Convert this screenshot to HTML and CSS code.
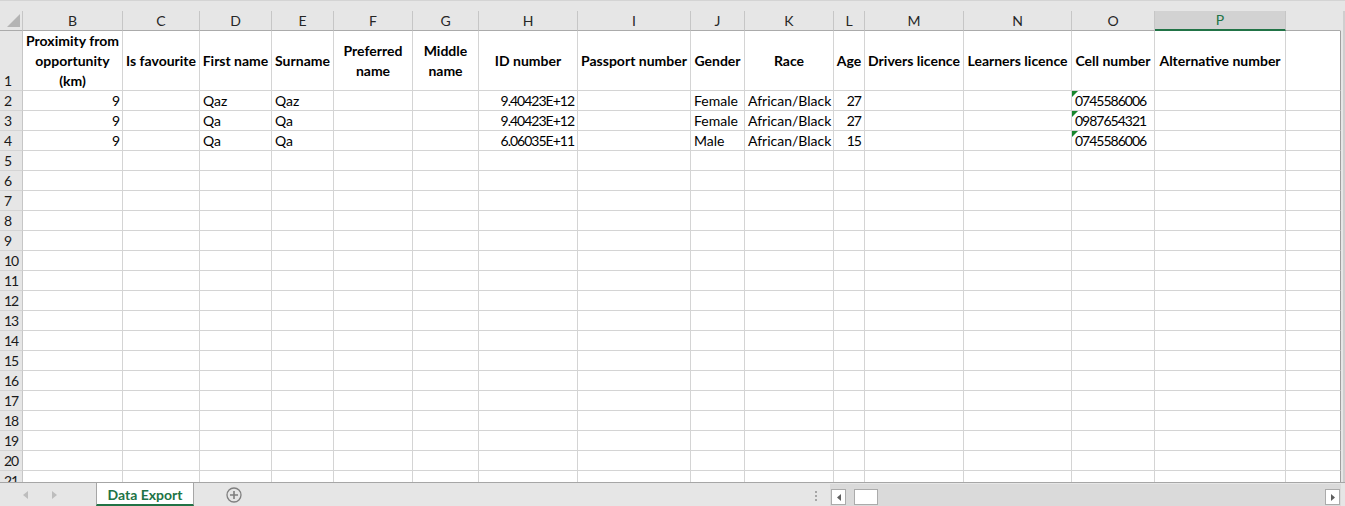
FILE: index.html
```html
<!DOCTYPE html>
<html lang="en">
<head>
<meta charset="utf-8">
<title>Data Export</title>
<link rel="stylesheet" href="styles.css">
</head>
<body>
<div class="app">
  <div class="topstrip"></div>
  <div class="main">
    <div class="sheet">
      <div class="row hdr">
        <div class="corner"><svg width="13" height="13" viewBox="0 0 13 13"><polygon points="13,0 13,13 0,13" fill="#b4b4b4"/></svg></div>
        <div>B</div><div>C</div><div>D</div><div>E</div><div>F</div><div>G</div><div>H</div><div>I</div><div>J</div><div>K</div><div>L</div><div>M</div><div>N</div><div>O</div><div class="sel">P</div><div class="blank"></div>
      </div>
      <div class="row r1">
        <div class="rh">1</div>
        <div>Proximity from<br>opportunity<br>(km)</div>
        <div>Is favourite</div>
        <div>First name</div>
        <div>Surname</div>
        <div>Preferred<br>name</div>
        <div>Middle<br>name</div>
        <div>ID number</div>
        <div>Passport number</div>
        <div>Gender</div>
        <div>Race</div>
        <div>Age</div>
        <div>Drivers licence</div>
        <div>Learners licence</div>
        <div>Cell number</div>
        <div>Alternative number</div>
        <div></div>
      </div>
      <div class="row">
        <div class="rh">2</div><div class="num">9</div><div></div><div>Qaz</div><div>Qaz</div><div></div><div></div><div class="num">9.40423E+12</div><div></div><div>Female</div><div>African/Black</div><div class="num">27</div><div></div><div></div><div class="tri digits">0745586006</div><div></div><div></div>
      </div>
      <div class="row">
        <div class="rh">3</div><div class="num">9</div><div></div><div>Qa</div><div>Qa</div><div></div><div></div><div class="num">9.40423E+12</div><div></div><div>Female</div><div>African/Black</div><div class="num">27</div><div></div><div></div><div class="tri digits">0987654321</div><div></div><div></div>
      </div>
      <div class="row">
        <div class="rh">4</div><div class="num">9</div><div></div><div>Qa</div><div>Qa</div><div></div><div></div><div class="num">6.06035E+11</div><div></div><div>Male</div><div>African/Black</div><div class="num">15</div><div></div><div></div><div class="tri digits">0745586006</div><div></div><div></div>
      </div>
      <div class="row"><div class="rh">5</div><div></div><div></div><div></div><div></div><div></div><div></div><div></div><div></div><div></div><div></div><div></div><div></div><div></div><div></div><div></div><div></div></div>
      <div class="row"><div class="rh">6</div><div></div><div></div><div></div><div></div><div></div><div></div><div></div><div></div><div></div><div></div><div></div><div></div><div></div><div></div><div></div><div></div></div>
      <div class="row"><div class="rh">7</div><div></div><div></div><div></div><div></div><div></div><div></div><div></div><div></div><div></div><div></div><div></div><div></div><div></div><div></div><div></div><div></div></div>
      <div class="row"><div class="rh">8</div><div></div><div></div><div></div><div></div><div></div><div></div><div></div><div></div><div></div><div></div><div></div><div></div><div></div><div></div><div></div><div></div></div>
      <div class="row"><div class="rh">9</div><div></div><div></div><div></div><div></div><div></div><div></div><div></div><div></div><div></div><div></div><div></div><div></div><div></div><div></div><div></div><div></div></div>
      <div class="row"><div class="rh">10</div><div></div><div></div><div></div><div></div><div></div><div></div><div></div><div></div><div></div><div></div><div></div><div></div><div></div><div></div><div></div><div></div></div>
      <div class="row"><div class="rh">11</div><div></div><div></div><div></div><div></div><div></div><div></div><div></div><div></div><div></div><div></div><div></div><div></div><div></div><div></div><div></div><div></div></div>
      <div class="row"><div class="rh">12</div><div></div><div></div><div></div><div></div><div></div><div></div><div></div><div></div><div></div><div></div><div></div><div></div><div></div><div></div><div></div><div></div></div>
      <div class="row"><div class="rh">13</div><div></div><div></div><div></div><div></div><div></div><div></div><div></div><div></div><div></div><div></div><div></div><div></div><div></div><div></div><div></div><div></div></div>
      <div class="row"><div class="rh">14</div><div></div><div></div><div></div><div></div><div></div><div></div><div></div><div></div><div></div><div></div><div></div><div></div><div></div><div></div><div></div><div></div></div>
      <div class="row"><div class="rh">15</div><div></div><div></div><div></div><div></div><div></div><div></div><div></div><div></div><div></div><div></div><div></div><div></div><div></div><div></div><div></div><div></div></div>
      <div class="row"><div class="rh">16</div><div></div><div></div><div></div><div></div><div></div><div></div><div></div><div></div><div></div><div></div><div></div><div></div><div></div><div></div><div></div><div></div></div>
      <div class="row"><div class="rh">17</div><div></div><div></div><div></div><div></div><div></div><div></div><div></div><div></div><div></div><div></div><div></div><div></div><div></div><div></div><div></div><div></div></div>
      <div class="row"><div class="rh">18</div><div></div><div></div><div></div><div></div><div></div><div></div><div></div><div></div><div></div><div></div><div></div><div></div><div></div><div></div><div></div><div></div></div>
      <div class="row"><div class="rh">19</div><div></div><div></div><div></div><div></div><div></div><div></div><div></div><div></div><div></div><div></div><div></div><div></div><div></div><div></div><div></div><div></div></div>
      <div class="row"><div class="rh">20</div><div></div><div></div><div></div><div></div><div></div><div></div><div></div><div></div><div></div><div></div><div></div><div></div><div></div><div></div><div></div><div></div></div>
      <div class="row"><div class="rh">21</div><div></div><div></div><div></div><div></div><div></div><div></div><div></div><div></div><div></div><div></div><div></div><div></div><div></div><div></div><div></div><div></div></div>
    </div>
    <div class="vstrip"></div>
  </div>
  <div class="tabbar">
    <div class="nav">
      <svg class="arrow" width="5" height="8" viewBox="0 0 5 8"><polygon points="5,0 5,8 0,4" fill="#bdbdbd"/></svg>
      <svg class="arrow" width="5" height="8" viewBox="0 0 5 8"><polygon points="0,0 0,8 5,4" fill="#bdbdbd"/></svg>
    </div>
    <div class="tab">Data Export</div>
    <div class="add">
      <svg width="16" height="16" viewBox="0 0 16 16"><circle cx="8" cy="8" r="7" fill="none" stroke="#7f7f7f" stroke-width="1.3"/><path d="M8 4v8M4 8h8" stroke="#7f7f7f" stroke-width="1.6"/></svg>
    </div>
    <div class="spacer"></div>
    <div class="dots">
      <svg width="2" height="10" viewBox="0 0 2 10"><rect x="0" y="0" width="2" height="2" fill="#a6a6a6"/><rect x="0" y="4" width="2" height="2" fill="#a6a6a6"/><rect x="0" y="8" width="2" height="2" fill="#a6a6a6"/></svg>
    </div>
    <div class="hscroll">
      <div class="sbtn"><svg width="4" height="7" viewBox="0 0 4 7"><polygon points="4,0 4,7 0,3.5" fill="#5f5f5f"/></svg></div>
      <div class="thumb"></div>
      <div class="track"></div>
      <div class="sbtn"><svg width="4" height="7" viewBox="0 0 4 7"><polygon points="0,0 0,7 4,3.5" fill="#5f5f5f"/></svg></div>
    </div>
    <div class="endgap"></div>
  </div>
</div>
</body>
</html>
```

FILE: styles.css
```css
body {
  margin: 0;
  background: #e6e6e6;
  font-family: Lato, "Liberation Sans", sans-serif;
  font-size: 14px;
  color: #000;
}

.app {
  width: 1345px;
  height: 506px;
  display: flex;
  flex-direction: column;
  overflow: hidden;
}

.topstrip {
  height: 11px;
  flex: none;
  box-sizing: border-box;
  border-top: 1px solid #d4d4d4;
  background: #e6e6e6;
}

.main {
  height: 471px;
  flex: none;
  display: flex;
  overflow: hidden;
}

.sheet {
  width: 1341px;
  flex: none;
  background: #fff;
  overflow: hidden;
}

.row {
  display: grid;
  grid-template-columns: 23px 100px 77px 72px 62px 79px 66px 99px 113px 54px 89px 31px 99px 108px 83px 131px 55px;
  height: 20px;
}

.row > div {
  box-sizing: border-box;
  border-right: 1px solid #d4d4d4;
  border-bottom: 1px solid #d4d4d4;
  padding: 0 3px;
  line-height: 19px;
  white-space: nowrap;
  overflow: hidden;
}

.row > div:last-child {
  border-right-color: #9e9e9e;
}

.hdr {
  background: #e6e6e6;
}

.hdr > div {
  text-align: center;
  color: #262626;
  border-right-color: #c6c6c6;
  border-bottom-color: #ababab;
}

.hdr > div.blank {
  border-right-color: #e6e6e6;
}

.hdr .corner {
  display: flex;
  align-items: flex-end;
  justify-content: flex-end;
  padding: 0 2px 3px 0;
}

.hdr .sel {
  background: #d2d2d2;
  color: #217346;
  border-bottom: 2px solid #217346;
  line-height: 18px;
}

.rh {
  background: #e6e6e6;
  color: #1a1a1a;
  border-right-color: #c6c6c6 !important;
  padding-left: 4px !important;
  letter-spacing: -1px;
}

.r1 {
  height: 60px;
}

.r1 > div {
  display: flex;
  align-items: center;
  justify-content: center;
  text-align: center;
  line-height: 20px;
  font-weight: bold;
}

.r1 > .rh {
  font-weight: normal;
  align-items: flex-end;
  justify-content: flex-start;
  line-height: 19px;
}

.num {
  text-align: right;
  letter-spacing: -1px;
}

.digits {
  letter-spacing: -1px;
}

.tri {
  position: relative;
}

.tri::before {
  content: "";
  position: absolute;
  left: 0;
  top: 0;
  border-top: 6px solid #17852b;
  border-right: 6px solid transparent;
}

.vstrip {
  flex: 1;
  background: #e6e6e6;
  box-shadow: inset -2px 0 #cfcfcf;
}

.tabbar {
  height: 24px;
  flex: none;
  box-sizing: border-box;
  border-top: 1px solid #a6a6a6;
  background: #e6e6e6;
  display: flex;
  align-items: stretch;
}

.nav {
  width: 96px;
  flex: none;
  display: flex;
  align-items: center;
  padding-left: 23px;
  gap: 24px;
  box-sizing: border-box;
}

.tab {
  width: 98px;
  flex: none;
  box-sizing: border-box;
  background: #fff;
  border-left: 1px solid #a6a6a6;
  border-right: 1px solid #a6a6a6;
  border-bottom: 2px solid #217346;
  color: #217346;
  font-weight: bold;
  display: flex;
  align-items: center;
  justify-content: center;
  padding-top: 1px;
}

.add {
  flex: none;
  display: flex;
  align-items: center;
  padding-left: 32px;
  padding-top: 1px;
}

.spacer {
  flex: 1;
}

.dots {
  width: 15px;
  flex: none;
  display: flex;
  align-items: center;
  padding-top: 2px;
}

.hscroll {
  width: 511px;
  flex: none;
  box-sizing: border-box;
  background: #dadada;
  display: flex;
  align-items: flex-start;
  padding: 5px 1px 0 1px;
  margin-top: 1px;
}

.sbtn {
  width: 15px;
  height: 16px;
  flex: none;
  box-sizing: border-box;
  background: #fff;
  border: 1px solid #ababab;
  display: flex;
  align-items: center;
  justify-content: center;
}

.thumb {
  width: 24px;
  height: 16px;
  flex: none;
  box-sizing: border-box;
  margin-left: 8px;
  background: #fff;
  border: 1px solid #ababab;
}

.track {
  flex: 1;
}

.endgap {
  width: 4px;
  flex: none;
}
```
